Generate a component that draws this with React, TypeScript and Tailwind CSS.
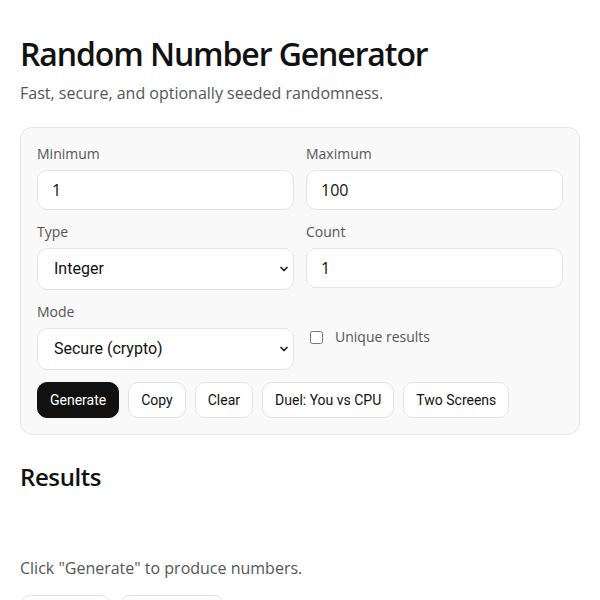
import { ChevronDown } from "lucide-react";

const sans = "font-['Open_Sans','Noto_Sans',sans-serif]";
const ui = "font-['Roboto','Liberation_Sans',sans-serif]";

function Field({ label, children }: { label: string; children: React.ReactNode }) {
  return (
    <div className="flex flex-col gap-[6px]">
      <label className="text-sm leading-5 text-[#555]">{label}</label>
      {children}
    </div>
  );
}

function TextInput({ value }: { value: string }) {
  return (
    <input
      type="text"
      defaultValue={value}
      className="h-10 w-full rounded-[10px] border border-[#e3e3e3] bg-white px-[14px] text-base text-[#111] outline-none"
    />
  );
}

function Select({ options }: { options: string[] }) {
  return (
    <div className="relative">
      <select
        className={`${ui} h-[42px] w-full appearance-none rounded-[10px] border border-[#e3e3e3] bg-white pl-4 pr-8 text-base text-[#111] outline-none`}
      >
        {options.map((o) => (
          <option key={o}>{o}</option>
        ))}
      </select>
      <ChevronDown
        size={12}
        strokeWidth={3.5}
        className="pointer-events-none absolute right-[4px] top-[15px] text-[#222]"
      />
    </div>
  );
}

function Btn({ children, dark }: { children: React.ReactNode; dark?: boolean }) {
  return (
    <button
      className={
        dark
          ? `${ui} h-9 rounded-[10px] border border-[#111] bg-[#111] px-3 text-sm text-white`
          : `${ui} h-9 rounded-[10px] border border-[#e3e3e3] bg-white px-3 text-sm text-[#111]`
      }
    >
      {children}
    </button>
  );
}

export default function App() {
  return (
    <div className={`${sans} h-screen overflow-hidden bg-white px-5 pt-[35px] text-[#111]`}>
      <h1 className="text-[32px] font-semibold leading-[38px] tracking-[-1.1px]">
        Random Number Generator
      </h1>
      <p className="mt-[8px] text-base leading-6 text-[#555]">
        Fast, secure, and optionally seeded randomness.
      </p>

      {/* Controls */}
      <div className="mt-[22px] rounded-xl border border-[#e6e6e6] bg-[#f9f9f9] p-4">
        <div className="grid grid-cols-2 gap-x-3 gap-y-3">
          <Field label="Minimum">
            <TextInput value="1" />
          </Field>
          <Field label="Maximum">
            <TextInput value="100" />
          </Field>
          <Field label="Type">
            <Select options={["Integer", "Decimal"]} />
          </Field>
          <Field label="Count">
            <TextInput value="1" />
          </Field>
          <Field label="Mode">
            <Select options={["Secure (crypto)", "Seeded"]} />
          </Field>
          <div className="pt-[25px]">
            <label className="flex h-5 items-center gap-[12px] pl-1 text-sm text-[#555]">
              <input type="checkbox" className="h-[13px] w-[13px]" />
              Unique results
            </label>
          </div>
        </div>

        <div className="mt-3 flex gap-[9px]">
          <Btn dark>Generate</Btn>
          <Btn>Copy</Btn>
          <Btn>Clear</Btn>
          <Btn>Duel: You vs CPU</Btn>
          <Btn>Two Screens</Btn>
        </div>
      </div>

      {/* Results */}
      <h2 className="mt-6 text-2xl font-semibold leading-9 tracking-[-0.4px]">Results</h2>
      <div className="h-[61px]" />
      <p className="text-base leading-6 text-[#555]">Click "Generate" to produce numbers.</p>

      {/* export buttons, below the fold */}
      <div className="mt-[15px] flex gap-[9px]">
        <button
          aria-label="Export CSV"
          className="h-9 w-[91px] rounded-[10px] border border-[#e3e3e3] bg-white"
        />
        <button
          aria-label="Export JSON"
          className="h-9 w-[104px] rounded-[10px] border border-[#e3e3e3] bg-white"
        />
      </div>
    </div>
  );
}
